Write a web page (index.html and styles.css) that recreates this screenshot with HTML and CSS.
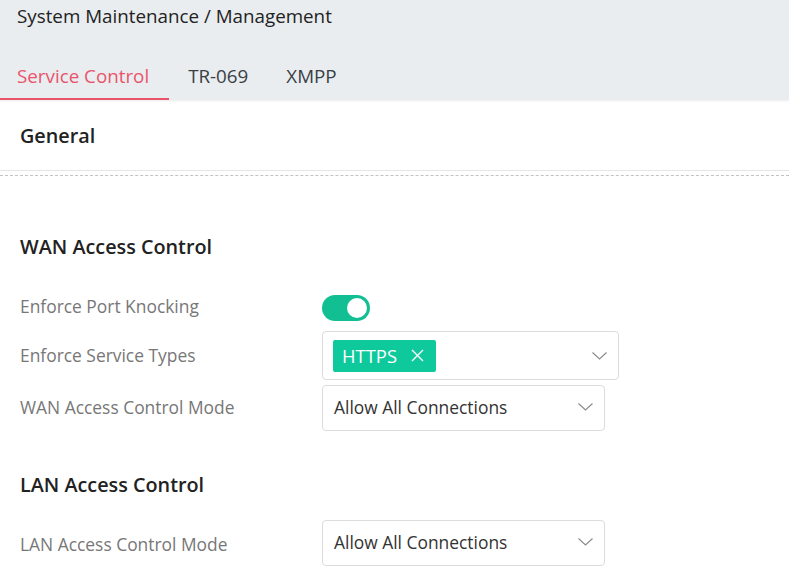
FILE: index.html
```html
<!DOCTYPE html>
<html>
<head>
    <title>System Maintenance - Management</title>
    <link rel="stylesheet" href="styles.css">
</head>
<body>
    <div class="header">
        <div class="page-title">System Maintenance / Management</div>
        <div class="tabs">
            <div class="tab active">Service Control</div>
            <div class="tab">TR-069</div>
            <div class="tab">XMPP</div>
        </div>
    </div>

    <div class="card-head">
        <h2>General</h2>
    </div>
    <div class="dashed"></div>

    <div class="section">
        <h3>WAN Access Control</h3>
        <div class="row row-toggle">
            <div class="label">Enforce Port Knocking</div>
            <label class="switch">
                <input type="checkbox" checked>
                <span class="slider"></span>
            </label>
        </div>
        <div class="row row-multi">
            <div class="label">Enforce Service Types</div>
            <div class="multi-select">
                <span class="chip">HTTPS
                    <svg class="chip-x" width="13" height="13" viewBox="0 0 13 13"><path d="M1 1L12 12M12 1L1 12" stroke="#fff" stroke-width="1.4" fill="none"/></svg>
                </span>
                <svg class="chevron" width="15" height="8" viewBox="0 0 15 8"><path d="M0.5 0.5L7.5 7L14.5 0.5" stroke="#8a8a8a" stroke-width="1.1" fill="none"/></svg>
            </div>
        </div>
        <div class="row row-select">
            <div class="label">WAN Access Control Mode</div>
            <div class="select">
                <span>Allow All Connections</span>
                <svg class="chevron" width="15" height="8" viewBox="0 0 15 8"><path d="M0.5 0.5L7.5 7L14.5 0.5" stroke="#8a8a8a" stroke-width="1.1" fill="none"/></svg>
            </div>
        </div>
    </div>

    <div class="section lan">
        <h3>LAN Access Control</h3>
        <div class="row row-select">
            <div class="label">LAN Access Control Mode</div>
            <div class="select">
                <span>Allow All Connections</span>
                <svg class="chevron" width="15" height="8" viewBox="0 0 15 8"><path d="M0.5 0.5L7.5 7L14.5 0.5" stroke="#8a8a8a" stroke-width="1.1" fill="none"/></svg>
            </div>
        </div>
    </div>
</body>
</html>
```

FILE: styles.css
```css
body {
    margin: 0;
    background: #fff;
    color: #333;
    font-family: 'Open Sans', 'Segoe UI', Arial, sans-serif;
    overflow: hidden;
}
.header {
    height: 100px;
    background: #e9edf0;
    box-shadow: 0 1px 2px rgba(0, 0, 0, 0.08);
    position: relative;
    display: flex;
    flex-direction: column;
}
.page-title {
    font-size: 18.8px;
    line-height: 26px;
    padding: 3px 0 0 17px;
    color: #222;
}
.tabs {
    display: flex;
    margin-top: auto;
}
.tab {
    font-size: 18.8px;
    line-height: 42px;
    padding: 0 19px 1px;
    color: #3a3f45;
    border-bottom: 2px solid transparent;
}
.tab.active {
    padding: 0 20px 1px 17px;
    color: #e9546b;
    border-bottom-color: #e9546b;
}
.card-head {
    height: 70px;
    display: flex;
    align-items: center;
    padding-left: 20px;
    border-bottom: 1px solid #e6e6e6;
}
.card-head h2 {
    margin: 0;
    font-size: 19.8px;
    font-weight: 600;
    color: #222;
    padding-top: 1px;
}
.dashed {
    margin-top: 4px;
    border-top: 1px dashed #c2c2c2;
}
.section {
    padding: 0 20px;
}
.section h3 {
    margin: 0;
    font-size: 19.8px;
    font-weight: 600;
    color: #222;
    line-height: 26px;
    padding-top: 58px;
}
.row {
    display: flex;
    align-items: center;
}
.label {
    width: 302px;
    font-size: 17.4px;
    color: #777;
    margin-top: -2px;
}
.row-toggle .label {
    margin-top: -4px;
}
.row-toggle {
    margin-top: 35px;
}
.row-multi {
    margin-top: 10px;
}
.row-select {
    margin-top: 5px;
}
.switch {
    position: relative;
    display: inline-block;
    width: 48px;
    height: 26px;
}
.switch input {
    opacity: 0;
    width: 0;
    height: 0;
}
.slider {
    position: absolute;
    top: 0;
    left: 0;
    right: 0;
    bottom: 0;
    background: #12bf93;
    border-radius: 13px;
}
.slider:before {
    position: absolute;
    content: "";
    width: 20px;
    height: 20px;
    right: 3px;
    top: 3px;
    background: #fff;
    border-radius: 50%;
}
.multi-select {
    width: 297px;
    height: 49px;
    box-sizing: border-box;
    border: 1px solid #dcdcdc;
    border-radius: 4px;
    display: flex;
    align-items: center;
    padding: 0 11px 0 10px;
}
.chip {
    display: inline-flex;
    align-items: center;
    height: 32px;
    padding: 0 12px 0 9px;
    background: #0ec99c;
    border-radius: 2px;
    color: #fff;
    font-size: 18.4px;
}
.chip-x {
    margin-left: 14px;
}
.chevron {
    margin-left: auto;
}
.select {
    width: 283px;
    height: 46px;
    box-sizing: border-box;
    border: 1px solid #dcdcdc;
    border-radius: 4px;
    display: flex;
    align-items: center;
    padding: 0 11px 2px 11px;
    font-size: 17.4px;
    color: #333;
}
.lan h3 {
    padding-top: 41px;
}
.lan .row-select {
    margin-top: 22px;
}
.lan .label {
    margin-top: 1px;
}
```
